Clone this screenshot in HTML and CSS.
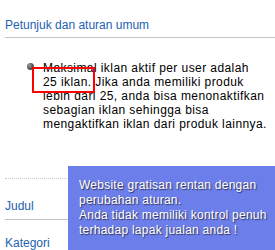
FILE: index.html
```
<!DOCTYPE html>
<html>
<head>
  <title>Petunjuk</title>
  <link rel="stylesheet" href="styles.css">
</head>
<body>

  <div class="page">
    <h3 class="section-title">Petunjuk dan aturan umum</h3>

    <ul class="rules">
      <li>Maksimal iklan aktif per user adalah<br>25 iklan. Jika anda memiliki produk<br>lebih dari 25, anda bisa menonaktifkan<br>sebagian iklan sehingga bisa<br>mengaktifkan iklan dari produk lainnya.</li>
    </ul>

    <div class="field field-first">
      <label>Judul</label>
    </div>
    <div class="field">
      <label>Kategori</label>
    </div>

    <!-- red mark around "25 iklan." -->
    <span class="mark"></span>

    <div class="notice">
      Website gratisan rentan dengan<br>perubahan aturan.<br>Anda tidak memiliki kontrol penuh<br>terhadap lapak jualan anda !
    </div>
  </div>

</body>
</html>
```

FILE: styles.css
```
body {
  margin: 0;
  font-family: "Liberation Sans", Arial, sans-serif;
  font-size: 12px;
  background: #ffffff;
  color: #000;
  overflow: hidden;
}

.page {
  position: relative;
  height: 250px;
  margin-left: 5px;
  overflow: hidden;
}

.section-title {
  margin: 0;
  padding-top: 18px;
  padding-bottom: 5px;
  font-size: 12px;
  font-weight: normal;
  line-height: 14px;
  color: #2361b0;
  border-bottom: 1px solid #c4c4c4;
}

.rules {
  margin: 23px 0 0 0;
  padding: 0 0 0 38px;
  list-style: none;
}

.rules li {
  position: relative;
  line-height: 14px;
  letter-spacing: 0.42px;
  white-space: nowrap;
}

.rules li::before {
  content: "";
  position: absolute;
  left: -16px;
  top: 2px;
  width: 7px;
  height: 7px;
  border-radius: 50%;
  background: radial-gradient(circle at 35% 35%, #9a9a9a, #4a4a4a 60%, #333 100%);
}

.field {
  padding: 16px 0 6px 0;
  line-height: 14px;
  border-bottom: 1px solid #c4c4c4;
}

.field-first {
  margin-top: 47px;
  padding-top: 20px;
  border-top: 1px dotted #c8c8c8;
}

.field label {
  color: #2361b0;
}

.mark {
  position: absolute;
  left: 27px;
  top: 67px;
  width: 59px;
  height: 22px;
  border: 2px solid #ff0000;
}

.notice {
  position: absolute;
  left: 63px;
  top: 166px;
  right: 0;
  bottom: 0;
  padding: 12px 0 0 11px;
  background: #6b7eea;
  color: #ffffff;
  line-height: 15px;
  letter-spacing: 0.25px;
  text-shadow: 1px 1px 1px #333355;
  white-space: nowrap;
}
```
